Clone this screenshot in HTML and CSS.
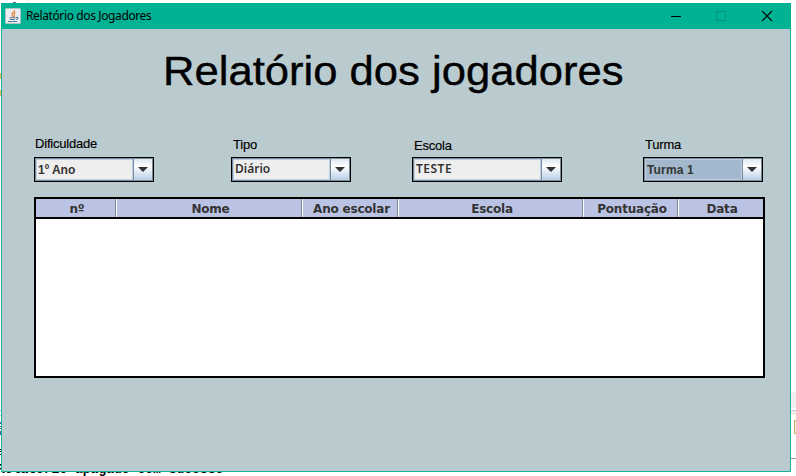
FILE: index.html
```html
<!DOCTYPE html>
<html lang="pt">
<head>
<meta charset="utf-8">
<title>Relatório dos Jogadores</title>
<link rel="stylesheet" href="styles.css">
</head>
<body>
<div class="desktop">
  <svg class="backdrop" width="796" height="476" shape-rendering="crispEdges">
    <path d="M13 2h3v1h-3z" fill="#56748f"/><path d="M27 0h1v3h-1z" fill="#eee"/>
    <path d="M0 73h1v6h-1zM0 90h1v6h-1z" fill="#e2b75b"/>
    <path d="M0 410h1v1h-1zM0 415h1v1h-1z" fill="#a9cbe0"/>
    <path d="M0 422h1v2h-1zM0 426h1v1h-1zM0 428h1v1h-1zM0 431h1v4h-1z" fill="#3c69a5"/>
    <path d="M0 449h1v1h-1zM0 451h1v1h-1zM0 454h1v1h-1z" fill="#111"/>
    <path d="M791 392h5v16h-5z" fill="#f0f0f3"/><path d="M791 410h5v1h-5z" fill="#b9c7ee"/>
    <path d="M791 411h5v4h-5z" fill="#f0ede3"/><path d="M791 458h5v1h-5z" fill="#999"/>
    <path d="M794 420h2v14h-2z" fill="#c9a95c"/><path d="M795 421h1v12h-1z" fill="#f4f0e6"/>
  </svg>
  <div class="console">Relatorio apagado com sucesso</div>
  <main class="window">
    <header class="titlebar">
      <svg class="java" width="16" height="16" viewBox="0 0 16 16">
        <rect x=".5" y=".5" width="15" height="15" rx="1" fill="#e9edf0" stroke="#b4c3c8"/>
        <path d="M9.500 2c.5 2-3 2.600-2.500 4.500.2 1 1.200 1.500 1 2.500M10.500 4.500c-1.500.8-2 1.500-1.200 2.500.4.700 0 1.500-.5 2" fill="none" stroke="#e58333" stroke-width="1.200"/>
        <path d="M4.500 9.700h6M5 11.500h5M3 13.500h9M11 9.500c3-.8 2 1.700 0 2" fill="none" stroke="#55799a" stroke-width="1.100"/>
      </svg>
      <span class="caption">Relatório dos Jogadores</span>
      <svg class="controls" width="102" height="12" viewBox="0 0 102 12" fill="none">
        <path d="M0 6.500h10" stroke="#000"/>
        <rect x="45.500" y="1.500" width="9" height="9" stroke="#08947c"/>
        <path d="M91 1l10 10M101 1L91 11" stroke="#000" stroke-width="1.100"/>
      </svg>
    </header>
    <h1 class="heading"><span>Relatório dos jogadores</span></h1>
    <section class="filters">
      <div class="field"><label class="l0">Dificuldade</label><div class="combo"><span class="value v1">1º Ano</span><span class="arrow"></span></div></div>
      <div class="field"><label class="l1">Tipo</label><div class="combo"><span class="value v2">Diário</span><span class="arrow"></span></div></div>
      <div class="field wide"><label class="l2">Escola</label><div class="combo"><span class="value v3">TESTE</span><span class="arrow"></span></div></div>
      <div class="field"><label class="l3">Turma</label><div class="combo focused"><span class="value v4">Turma 1</span><span class="arrow"></span></div></div>
    </section>
    <section class="table">
      <div class="thead">
        <span>nº</span><span>Nome</span><span>Ano escolar</span><span>Escola</span><span>Pontuação</span><span>Data</span>
      </div>
    </section>
  </main>
</div>
</body>
</html>
```

FILE: styles.css
```css
* { box-sizing: border-box; }
body { margin: 0; background: #fff; }
.desktop { position: relative; width: 796px; height: 476px; overflow: hidden; font-family: "Liberation Sans", Arial, sans-serif; }
.backdrop { position: absolute; left: 0; top: 0; }
.console { position: absolute; left: -3px; top: 462px; font: bold 13px/15px "Liberation Mono", monospace; white-space: pre; }
.window { position: relative; width: 790px; height: 469px; margin: 3px 0 0 1px; border: 1px solid #1cb09a; border-top: 0; background: #bacbcf; }
.titlebar { display: flex; align-items: center; height: 26px; margin: 0 -1px; padding: 0 18px 0 4px; background: #00b294; }
.caption { margin-left: 5px; font: 12px/16px "Noto Sans", sans-serif; letter-spacing: -0.38px; color: #000; white-space: nowrap; }
.controls { margin-left: auto; }
.heading { display: flex; margin: 0; height: 102px; padding: 19px 0 0 161px; font-size: 40px; line-height: 46px; font-weight: 400; color: #000; white-space: nowrap; -webkit-text-stroke: 0.4px #000; }
.heading span { transform-origin: 0 50%; transform: scaleX(1.09); }
.filters { display: grid; grid-template-columns: 197px 181px 231px 120px; height: 66px; padding-left: 32px; }
.field { width: 120px; }
.wide { width: 150px; }
label { display: block; height: 26px; padding: 5px 0 0 1px; font-size: 13px; line-height: 15px; letter-spacing: -0.2px; color: #000; -webkit-text-stroke: 0.15px #000; }
.l1 { padding: 6px 0 0 2px; }
.l2 { padding: 7px 0 0 2px; }
.l3 { padding: 6px 0 0 2px; }
.combo { display: flex; height: 25px; border: 1px solid #000; padding: 1px; background: #7a8a99; }
.value { flex: 1; border: 1px solid #b8cfe5; background: #eee; padding: 1px 0 0 1px; font-weight: bold; font-size: 12px; line-height: 18px; color: #333; white-space: nowrap; }
.focused .value { background: #a3b8cc; letter-spacing: 0.15px; }
.arrow { display: flex; align-items: center; justify-content: center; width: 18px; margin-left: 1px; background: linear-gradient(#dce7f2, #fff 35%, #b8cfe5); }
.arrow::before { content: ""; border: 5px solid transparent; border-top-color: #333; border-bottom: 0; }
.v2, .v3 { font-family: "Noto Sans", sans-serif; font-weight: 600; padding-top: 0; }
.v3 { letter-spacing: 0.5px; }
.table { width: 731px; height: 181px; margin-left: 32px; border: 2px solid #000; background: #fff; }
.thead { display: grid; grid-template: 18px / 81px 186px 96px 185px 95px 84px; height: 20px; border-bottom: 2px solid #000; background: #bac3e4; }
.thead span { height: 18px; padding: 1px 0 0 2px; border-right: 1px solid #fff; box-shadow: inset -1px 0 #7a8a99; font: bold 12px/18px "DejaVu Sans", sans-serif; letter-spacing: -0.2px; color: #333; text-align: center; white-space: nowrap; }
.thead span:last-child { border: 0; box-shadow: none; }
```
